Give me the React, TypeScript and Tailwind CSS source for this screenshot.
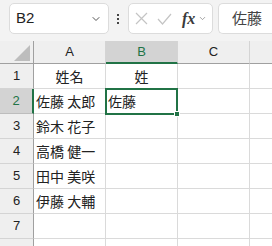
import { ChevronDown } from "lucide-react";

const rows: { n: number; a: string; b: string }[] = [
    { n: 1, a: "姓名", b: "姓" },
    { n: 2, a: "佐藤 太郎", b: "佐藤" },
    { n: 3, a: "鈴木 花子", b: "" },
    { n: 4, a: "高橋 健一", b: "" },
    { n: 5, a: "田中 美咲", b: "" },
    { n: 6, a: "伊藤 大輔", b: "" },
    { n: 7, a: "", b: "" },
    { n: 8, a: "", b: "" },
];

const jp = "font-['Noto_Sans_CJK_JP','Noto_Sans',sans-serif]";

const App = () => {
    return (
        <div className="w-[272px] h-[246px] overflow-hidden bg-[#f3f3f3] font-['Liberation_Sans',sans-serif] text-[#222]">
            {/* formula bar */}
            <div className="flex h-[41px] items-start pt-[3px] pl-[9px] gap-0">
                <div className="flex h-[31px] w-[100px] items-center justify-between rounded-[5px] border border-[#dcdcdc] bg-white pl-[6px] pr-[6px]">
                    <span className="text-[15px] text-[#222]">B2</span>
                    <ChevronDown className="h-[12px] w-[12px] text-[#555]" strokeWidth={2} />
                </div>
                <div className="ml-[8px] mr-[9px] flex h-[31px] flex-col items-center justify-center gap-[2px]">
                    <span className="block h-[2px] w-[2px] bg-[#444]" />
                    <span className="block h-[2px] w-[2px] bg-[#444]" />
                    <span className="block h-[2px] w-[2px] bg-[#444]" />
                </div>
                <div className="flex h-[31px] w-[85px] items-center rounded-[5px] border border-[#dcdcdc] bg-white pl-[6px]">
                    <svg width="13" height="13" viewBox="0 0 13 13" className="text-[#c4c4c4]">
                        <path d="M1 1 L12 12 M12 1 L1 12" stroke="currentColor" strokeWidth="1.2" fill="none" />
                    </svg>
                    <svg width="15" height="12" viewBox="0 0 15 12" className="ml-[9px] text-[#c4c4c4]">
                        <path d="M1 6 L5.5 11 L14 1" stroke="currentColor" strokeWidth="1.2" fill="none" />
                    </svg>
                    <span className="ml-[10px] font-['Liberation_Serif',serif] text-[16px] font-bold italic leading-none text-[#3a3a3a]">fx</span>
                    <ChevronDown className="ml-[3px] h-[9px] w-[9px] text-[#888]" strokeWidth={2} />
                </div>
                <div className={`ml-[5px] flex h-[31px] flex-1 items-center rounded-l-[5px] border border-r-0 border-[#dcdcdc] bg-white pl-[13px] text-[15px] text-[#444] ${jp}`}>
                    佐藤
                </div>
            </div>

            {/* sheet */}
            <div className="relative">
                <div className="grid grid-cols-[34px_72px_72px_72px_1fr]">
                    <div className="relative h-[23px] border-r border-b border-[#a0a0a0] bg-[#efefef]">
                        <svg width="16" height="16" viewBox="0 0 16 16" className="absolute right-[3px] bottom-[2px]">
                            <path d="M16 0 L16 16 L0 16 Z" fill="#bdbdbd" />
                        </svg>
                    </div>
                    <div className="flex h-[23px] items-center justify-center border-r border-b border-[#a0a0a0] border-r-[#d4d4d4] bg-[#efefef] text-[13px]">A</div>
                    <div className="flex h-[23px] items-center justify-center border-r border-b-2 border-r-[#d4d4d4] border-b-[#217346] bg-[#d3d3d3] text-[13px] text-[#217346]">B</div>
                    <div className="flex h-[23px] items-center justify-center border-r border-b border-[#a0a0a0] border-r-[#d4d4d4] bg-[#efefef] text-[13px]">C</div>
                    <div className="h-[23px] border-b border-[#a0a0a0] bg-[#efefef]" />
                    {rows.map((r) => {
                        const sel = r.n === 2;
                        return [
                            <div
                                key={`h${r.n}`}
                                className={`flex h-[25px] items-center justify-center border-b text-[13px] ${
                                    sel
                                        ? "border-r-2 border-r-[#217346] border-b-[#bdbdbd] bg-[#d3d3d3] text-[#217346]"
                                        : "border-r border-r-[#a0a0a0] border-b-[#d4d4d4] bg-[#efefef]"
                                }`}
                            >
                                {r.n < 8 ? r.n : ""}
                            </div>,
                            <div
                                key={`a${r.n}`}
                                className={`flex h-[25px] items-center overflow-hidden whitespace-nowrap border-r border-b border-[#dadada] bg-white text-[14px] ${jp} ${
                                    r.n === 1 ? "justify-center" : "pl-[2px]"
                                }`}
                            >
                                {r.a}
                            </div>,
                            <div
                                key={`b${r.n}`}
                                className={`flex h-[25px] items-center whitespace-nowrap border-r border-b border-[#dadada] bg-white text-[14px] ${jp} ${
                                    r.n === 1 ? "justify-center" : "pl-[2px]"
                                }`}
                            >
                                {r.b}
                            </div>,
                            <div key={`c${r.n}`} className="h-[25px] border-r border-b border-[#dadada] bg-white" />,
                            <div key={`d${r.n}`} className="h-[25px] border-b border-[#dadada] bg-white" />,
                        ];
                    })}
                </div>
                {/* active cell B2 */}
                <div className="pointer-events-none absolute left-[105px] top-[47px] h-[27px] w-[73px] border-2 border-[#217346]" />
                <div className="pointer-events-none absolute left-[174px] top-[70px] h-[6px] w-[6px] border border-white bg-[#217346]" />
            </div>
        </div>
    );
};

export default App;
